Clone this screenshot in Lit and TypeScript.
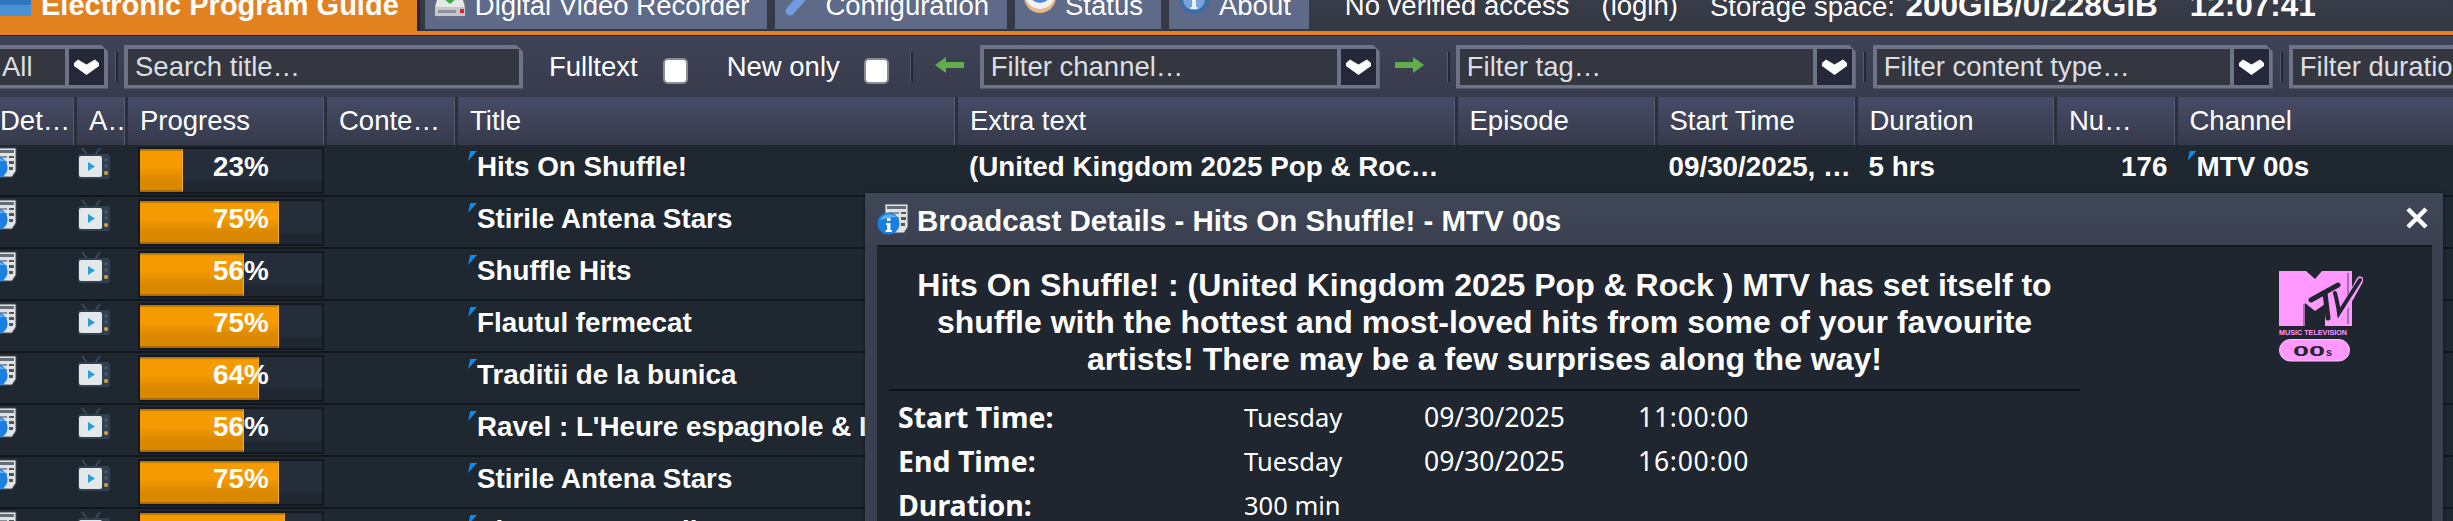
import { LitElement, html, css, svg } from "lit";
import { customElement } from "lit/decorators.js";

const docIcon = svg`<svg class="ico" viewBox="0 0 32 32">
  <path d="M8 1 H31 V24 L27 30 H14 V20 H8 Z" fill="#dfe3e6" stroke="#4a5058" stroke-width="1"/>
  <rect x="10" y="3" width="19" height="3" fill="#666c74"/>
  <rect x="12" y="9" width="10" height="2" fill="#8a9098"/><rect x="24" y="9" width="5" height="2" fill="#555"/>
  <rect x="16" y="14" width="6" height="2" fill="#8a9098"/><rect x="24" y="14" width="5" height="3" fill="#555"/>
  <rect x="18" y="20" width="4" height="2" fill="#8a9098"/><rect x="24" y="20" width="4" height="3" fill="#555"/>
  <circle cx="11.5" cy="20.5" r="11" fill="#1a7fe0"/>
  <path d="M3 17 A11 11 0 0 1 20 14 Q11 14 3 17Z" fill="#5fb0f4"/>
  <rect x="10" y="15" width="3.4" height="3" fill="#fff"/><path d="M9 20 H13.4 V27 H15 V29 H8.6 V27 H10 V22 H9Z" fill="#fff"/>
</svg>`;

const tvIcon = svg`<svg class="ico" viewBox="0 0 32 32">
  <path d="M9 8 L4 1 M17 8 L22 1" stroke="#3a4a58" stroke-width="2"/>
  <rect x="0" y="7" width="32" height="25" rx="2" fill="#2f4050"/>
  <rect x="1" y="9" width="23" height="21" rx="2" fill="#e4e8ea"/>
  <path d="M10 15 L17 19.5 L10 24Z" fill="#2aa0d8"/>
  <circle cx="28" cy="13" r="1.4" fill="#52606c"/><circle cx="28" cy="19" r="1.4" fill="#52606c"/>
  <circle cx="28" cy="26" r="2" fill="#e0a040"/>
</svg>`;

const chevron = svg`<svg class="chev" viewBox="0 0 25 16"><path d="M0 4 L4 0.5 L12.5 5.5 L21 0.5 L25 4 L25 7 L12.5 16 L0 7Z" fill="#fff"/></svg>`;

const driveIcon = svg`<svg class="ico" viewBox="0 11 32 49">
  <path d="M5 22 H27 L31 34 V45 H1 V34 Z" fill="#e6e8e8" stroke="#777" stroke-width="1"/>
  <path d="M9 20 H23 V27 L16 33 L9 27Z" fill="#3fa83f"/>
  <rect x="1" y="36" width="30" height="9" fill="#c4c8cc"/>
  <rect x="4" y="39" width="18" height="3" fill="#8b9096"/>
  <rect x="26" y="38" width="4" height="4" fill="#e0202a"/>
</svg>`;

const wrenchIcon = svg`<svg class="ico" viewBox="0 11 32 49">
  <path d="M6 40 L22 22" stroke="#6f9be0" stroke-width="9" stroke-linecap="round"/>
  <path d="M20 24 L30 18" stroke="#b9b4a4" stroke-width="4"/>
</svg>`;

const eyeIcon = svg`<svg class="ico" viewBox="0 11 32 49">
  <ellipse cx="16" cy="26" rx="16" ry="16" fill="#e8b88c"/>
  <ellipse cx="16" cy="23" rx="15" ry="15" fill="#f2f2f2"/>
  <circle cx="16" cy="21" r="11" fill="#4f86d8"/><circle cx="16" cy="21" r="5" fill="#2a58a8"/>
</svg>`;

const infoIcon = svg`<svg class="ico" viewBox="0 11 32 49">
  <circle cx="16" cy="28" r="15" fill="#3a6eaa"/><circle cx="16" cy="28" r="11" fill="#7aa4d8"/>
  <rect x="14" y="26" width="4" height="12" fill="#e8eef6"/><rect x="12.5" y="36" width="7" height="2" fill="#e8eef6"/>
</svg>`;

const epgIcon = svg`<svg class="ico" viewBox="0 11 32 49">
  <rect x="0" y="10" width="31" height="35" rx="2" fill="#2f78c0"/>
  <rect x="0" y="34" width="31" height="11" fill="#4a90d4"/>
</svg>`;

const mtvLogo = svg`<svg class="logo" viewBox="0 0 84 91">
  <path d="M0 0 H27 L36 8 L43 0 H73 V55 H46 V33 L36 40 L26 32 V55 H0 Z" fill="#ff99ff"/>
  <path d="M25 33 V55 M69 2 V53" stroke="#1f2630" stroke-width="0.8" fill="none"/>
  <path d="M60 24 Q62 36 62 42 Q72 26 81 9" fill="none" stroke="#ff99ff" stroke-width="7" stroke-linecap="round"/>
  <path d="M32 29 L59 14" stroke="#1f2630" stroke-width="5" fill="none" stroke-linecap="round"/>
  <path d="M46 22 L49 47" stroke="#1f2630" stroke-width="5" fill="none" stroke-linecap="round"/>
  <path d="M56 22 Q59 34 60 42 Q70 26 81 9" fill="none" stroke="#1f2630" stroke-width="4" stroke-linecap="round"/>
  <text x="0" y="64" font-family="Liberation Sans" font-weight="700" font-size="7" fill="#ff99ff" textLength="68" lengthAdjust="spacingAndGlyphs">MUSIC TELEVISION</text>
  <rect x="0.5" y="68.5" width="70" height="21.5" rx="10.7" fill="#ff99ff" stroke="#ffc0ff"/>
  <text x="14" y="84.5" font-family="Liberation Sans" font-weight="700" font-size="14.5" fill="#1f2630" textLength="32" lengthAdjust="spacingAndGlyphs">00</text>
  <text x="47" y="84.5" font-family="Liberation Sans" font-weight="700" font-size="11" fill="#1f2630">s</text>
</svg>`;

const rows = [
  { pct: 23, title: "Hits On Shuffle!" },
  { pct: 75, title: "Stirile Antena Stars" },
  { pct: 56, title: "Shuffle Hits" },
  { pct: 75, title: "Flautul fermecat" },
  { pct: 64, title: "Traditii de la bunica" },
  { pct: 56, title: "Ravel : L'Heure espagnole & L'enfant et les sortilèges" },
  { pct: 75, title: "Stirile Antena Stars" },
  { pct: 78, title: "Pianeta Tarantella" },
];

@customElement("app-root")
export class AppRoot extends LitElement {
  static styles = css`
    :host {
      display: block; position: relative; width: 2453px; height: 521px; overflow: hidden;
      background: #1f2731; color: #fff;
      font-family: "Liberation Sans", Arial, sans-serif; font-size: 27.5px;
    }
    .ico { width: 32px; height: 32px; flex: none; display: block; }
    .nav {
      display: flex; align-items: flex-start; height: 49px; margin-top: -18px;
      background: linear-gradient(#3a3e4a, #343843); white-space: nowrap;
    }
    .nav .ico { height: 49px; }
    .tab {
      display: flex; align-items: flex-start; gap: 9px; height: 47px; margin-right: 8px;
      padding: 0 18px 0 9px; background: #5e6a88; box-sizing: border-box; line-height: 47px;
    }
    .tab.active {
      height: 49px; padding: 0 18px 0 0; margin-right: 8px; background: #e28120; font-weight: 700;
      font-size: 29px; box-shadow: 3px 0 0 #26282e; line-height: 46px;
    }
    .meta { display: flex; gap: 32px; margin-left: 28px; line-height: 47px; }
    .meta b { font-size: 31.5px; }
    .meta span b { margin-left: 3px; }
    .rule { height: 4px; background: #e28120; }
    .toolbar {
      display: flex; align-items: center; border-top: 1px solid #24262e; box-sizing: border-box;
      height: 62px; background: linear-gradient(#3f4357, #383b4c); overflow: hidden; white-space: nowrap;
    }
    .combo {
      flex: none; display: flex; height: 44px; box-sizing: border-box; border: 4px solid #6e7488;
      background: #34373f; color: #dcdee2; line-height: 36px; position: relative;
      clip-path: polygon(0 0, calc(100% - 7px) 0, 100% 7px, 100% 100%, 0 100%);
    }
    .combo .val { flex: 1; padding-left: 7px; overflow: hidden; }
    .combo .btn {
      flex: none; width: 35px; background: #242838; border-left: 4px solid #6e7488;
      display: flex; align-items: center; justify-content: center;
    }
    .chev { width: 25px; height: 16px; filter: blur(0.5px); }
    .sep { flex: none; width: 3px; height: 30px; background: #23263a; border-left: 1px solid #55596c; box-sizing: border-box; }
    .lbl { flex: none; line-height: 36px; margin-top: 1px; }
    .check {
      flex: none; appearance: none; margin: 0; width: 25px; height: 26px; box-sizing: border-box;
      background: #fff; border: 2px solid #8a8d96; border-radius: 5px; margin-top: 8px;
    }
    .arr { flex: none; width: 29px; height: 16px; margin-bottom: 3px; filter: blur(0.5px); }

    .all { width: 112px; margin-left: -4px; margin-right: 7px; }
    .all .val { padding-left: 2px; }
    .search { width: 399px; margin-left: 6px; }
    .full { margin-left: 26px; }
    .ck1 { margin-left: 25px; }
    .new { margin-left: 39px; }
    .ck2 { margin-left: 24px; }
    .s2 { margin-left: 21px; }
    .a1 { margin-left: 22px; }
    .channel { width: 400px; margin-left: 16px; }
    .a2 { margin-left: 15px; }
    .s3 { margin-left: 23px; }
    .tag { width: 400px; margin-left: 6px; }
    .s4 { margin-left: 7px; }
    .ctype { width: 400px; margin-left: 7px; }
    .s5 { margin-left: 7px; }
    .dur { width: 300px; margin-left: 6px; }

    .table { margin-left: -12px; }
    .grid {
      display: grid;
      grid-template-columns: 89px 51px 199px 131px 500px 499.5px 200px 200px 199.5px 120.5px 287px;
    }
    .head { height: 48px; background: linear-gradient(#464c66, #363a4b); }
    .head div {
      padding-left: 12px; line-height: 47px; overflow: hidden; white-space: nowrap; box-sizing: border-box;
      border-right: 3px solid #2b2e3d; box-shadow: inset -1px 0 0 #555a70;
    }
    .row { height: 52px; border-bottom: 2px solid #12161b; box-sizing: border-box; background: #1f2731; font-weight: 700; font-size: 27.8px; }
    .row > div { white-space: nowrap; overflow: hidden; line-height: 40px; padding-top: 2px; box-sizing: border-box; height: 50px; }
    .row > .ic { padding: 2px 0 0; }
    .row .i1 { display: flex; justify-content: flex-end; padding-right: 60px; }
    .row .i2 { padding-left: 1px; }
    .row > .pc { padding: 2px 3px 0 10px; overflow: visible; }
    .bar {
      position: relative; height: 47px; width: 186px; box-sizing: border-box; border: 2px solid #15191f;
      background: linear-gradient(#242d39 0 75%, #1f2731 75%);
    }
    .fill {
      height: 100%; box-sizing: border-box; background: linear-gradient(#f59a00, #f59a00 40%, #d98800 75%);
      border-top: 2px solid #bd7800; border-bottom: 2px solid #a86a00; border-right: 1.5px solid #f2a83a;
    }
    .pct { position: absolute; left: 73px; top: 0; line-height: 35px; width: 55px; text-align: center; }
    .flag { position: relative; padding-left: 19px; text-overflow: ellipsis; }
    .flag::before {
      content: ""; position: absolute; left: 10px; top: 6px; width: 9px; height: 10px;
      background: #0a8cf0; clip-path: polygon(25% 0, 100% 0, 0 100%);
    }
    .pl { padding-left: 11px; }
    .ell { text-overflow: ellipsis; padding-right: 16px; }
    .row > .start { padding-right: 6px; }
    .r { text-align: right; padding-right: 10px; }

    .modal {
      position: absolute; left: 865px; top: 193px; width: 1578px; height: 340px; box-sizing: border-box;
      background: linear-gradient(#3f4656, #3a4050 60px); padding: 0 11px 0 12px;
      box-shadow: 0 0 3px rgba(0,0,0,.5);
    }
    .mhead { display: flex; align-items: center; height: 52px; gap: 8px; position: relative; font-weight: 700; font-size: 29.5px; }
    .mhead span { padding-top: 4px; }
    .mhead .x { position: absolute; right: 3px; top: 13px; width: 24px; height: 24px; }
    .mbody { background: #1f2630; border-top: 2px solid #14171c; height: 290px; padding-left: 12px; display: flex; }
    .info { width: 1191px; flex: none; }
    .desc {
      font: 700 32px/37px "Liberation Sans", Arial, sans-serif; text-align: center;
      padding: 20px 12px 9px; border-bottom: 2px solid #0d1014; height: 113px; box-sizing: content-box;
    }
    .details {
      display: grid; grid-template-columns: 346px 180px 214px auto; grid-auto-rows: 44px; padding: 4px 0 0 9px;
      font-family: "Noto Sans", sans-serif; font-size: 25.5px; line-height: 44px;
    }
    .details b { font-weight: 700; font-size: 28.5px; }
    .details .date { font-size: 26.5px; }
    .details .time { font-size: 26.5px; letter-spacing: .75px; }
    .logo { width: 84px; height: 91px; margin: 24px 0 0 199px; flex: none; }
  `;

  private combo(cls: string, text: string) {
    return html`<div class="combo ${cls}"><div class="val">${text}</div><div class="btn">${chevron}</div></div>`;
  }

  render() {
    return html`
      <div class="nav">
        <div class="tab active">${epgIcon}<span>Electronic Program Guide</span></div>
        <div class="tab">${driveIcon}<span>Digital Video Recorder</span></div>
        <div class="tab">${wrenchIcon}<span>Configuration</span></div>
        <div class="tab">${eyeIcon}<span>Status</span></div>
        <div class="tab">${infoIcon}<span>About</span></div>
        <div class="meta">
          <span>No verified access</span><span>(login)</span>
          <span>Storage space: <b>200GiB/0/228GiB</b></span><b>12:07:41</b>
        </div>
      </div>
      <div class="rule"></div>
      <div class="toolbar">
        ${this.combo("all", "All")}
        <div class="sep"></div>
        <div class="combo search"><div class="val">Search title…</div></div>
        <span class="lbl full">Fulltext</span><input class="check ck1" type="checkbox" />
        <span class="lbl new">New only</span><input class="check ck2" type="checkbox" />
        <div class="sep s2"></div>
        <svg class="arr a1" viewBox="0 0 29 16"><path d="M0 8 L11 0 V5 H29 V11 H11 V16Z" fill="#5fae4c"/></svg>
        ${this.combo("channel", "Filter channel…")}
        <svg class="arr a2" viewBox="0 0 29 16"><path d="M29 8 L18 0 V5 H0 V11 H18 V16Z" fill="#5fae4c"/></svg>
        <div class="sep s3"></div>
        ${this.combo("tag", "Filter tag…")}
        <div class="sep s4"></div>
        ${this.combo("ctype", "Filter content type…")}
        <div class="sep s5"></div>
        ${this.combo("dur", "Filter duration…")}
      </div>
      <div class="table">
        <div class="grid head">
          ${["Det…", "A…", "Progress", "Conte…", "Title", "Extra text", "Episode", "Start Time", "Duration", "Nu…", "Channel"].map(
            (h) => html`<div>${h}</div>`
          )}
        </div>
        ${rows.map(
          (r, i) => html`<div class="grid row">
            <div class="ic i1">${docIcon}</div>
            <div class="ic i2">${tvIcon}</div>
            <div class="pc">
              <div class="bar">
                <div class="fill" style="width:${r.pct * 1.85 + 0.4}px"></div>
                <div class="pct">${r.pct}%</div>
              </div>
            </div>
            <div></div>
            <div class="flag ell">${r.title}</div>
            ${i === 0
              ? html`<div class="pl ell">(United Kingdom 2025 Pop &amp; Rock ) MTV has set itself</div>
                  <div></div>
                  <div class="pl ell start">09/30/2025, 11:00:00</div>
                  <div class="pl">5 hrs</div>
                  <div class="r">176</div>
                  <div class="flag">MTV 00s</div>`
              : ""}
          </div>`
        )}
      </div>
      <div class="modal">
        <div class="mhead">
          ${docIcon}<span>Broadcast Details - Hits On Shuffle! - MTV 00s</span>
          <svg class="x" viewBox="0 0 24 24"><path d="M3 3 L21 21 M21 3 L3 21" stroke="#fff" stroke-width="4.5"/></svg>
        </div>
        <div class="mbody">
          <div class="info">
            <div class="desc">Hits On Shuffle! : (United Kingdom 2025 Pop &amp; Rock ) MTV has set itself to shuffle with the hottest and most-loved hits from some of your favourite artists! There may be a few surprises along the way!</div>
            <div class="details">
              <b>Start Time:</b><span>Tuesday</span><span class="date">09/30/2025</span><span class="time">11:00:00</span>
              <b>End Time:</b><span>Tuesday</span><span class="date">09/30/2025</span><span class="time">16:00:00</span>
              <b>Duration:</b><span>300 min</span>
            </div>
          </div>
          ${mtvLogo}
        </div>
      </div>
    `;
  }
}
